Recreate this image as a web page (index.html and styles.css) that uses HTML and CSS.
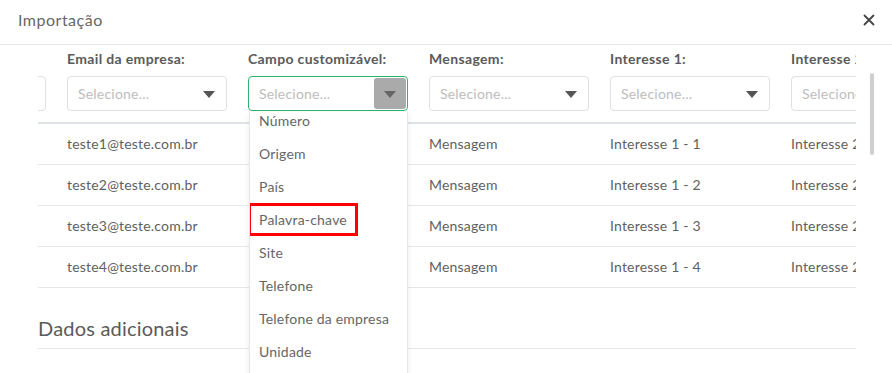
FILE: index.html
```html
<!DOCTYPE html>
<html lang="pt-BR">
<head>
  <meta charset="UTF-8" />
  <meta name="viewport" content="width=device-width, initial-scale=1.0" />
  <title>Importação</title>
  <link rel="stylesheet" href="styles.css">
</head>
<body>
  <div class="modal">
    <header class="modal-header">
      <h2>Importação</h2>
      <button class="close" aria-label="Fechar">
        <svg width="12" height="12" viewBox="0 0 12 12"><path d="M1.5 1.5L10.5 10.5M10.5 1.5L1.5 10.5" stroke="#444" stroke-width="1.8" stroke-linecap="round"/></svg>
      </button>
    </header>

    <div class="modal-body">
      <div class="table-clip">
        <table class="map-table">
          <thead>
            <tr>
              <th><label></label><div class="select"></div></th>
              <th><label>Email da empresa:</label><div class="select"><span>Selecione...</span><i class="caret"></i></div></th>
              <th><label>Campo customizável:</label><div class="select focused"><span>Selecione...</span><span class="caret-box"><i class="caret"></i></span></div></th>
              <th><label>Mensagem:</label><div class="select"><span>Selecione...</span><i class="caret"></i></div></th>
              <th><label>Interesse 1:</label><div class="select"><span>Selecione...</span><i class="caret"></i></div></th>
              <th><label>Interesse 2:</label><div class="select"><span>Selecione...</span><i class="caret"></i></div></th>
            </tr>
          </thead>
          <tbody>
            <tr><td></td><td>teste1@teste.com.br</td><td></td><td>Mensagem</td><td>Interesse 1 - 1</td><td>Interesse 2 - 1</td></tr>
            <tr><td></td><td>teste2@teste.com.br</td><td></td><td>Mensagem</td><td>Interesse 1 - 2</td><td>Interesse 2 - 2</td></tr>
            <tr><td></td><td>teste3@teste.com.br</td><td></td><td>Mensagem</td><td>Interesse 1 - 3</td><td>Interesse 2 - 3</td></tr>
            <tr><td></td><td>teste4@teste.com.br</td><td></td><td>Mensagem</td><td>Interesse 1 - 4</td><td>Interesse 2 - 4</td></tr>
          </tbody>
        </table>
      </div>

      <h3 class="section-title">Dados adicionais</h3>
    </div>

    <div class="scrollbar"></div>

    <div class="dropdown">
      <ul>
        <li>Número</li>
        <li>Origem</li>
        <li>País</li>
        <li><span class="marked"></span>Palavra-chave</li>
        <li>Site</li>
        <li>Telefone</li>
        <li>Telefone da empresa</li>
        <li>Unidade</li>
        <li>Website</li>
      </ul>
    </div>
  </div>
</body>
</html>
```

FILE: styles.css
```css
:root {
  --text-color: #5a5a5a;
  --muted-color: #bdbdbd;
  --line-color: #e4e6e8;
  --green: #2db46a;
  --font-main: 'Lato', 'Noto Sans', sans-serif;
}

* {
  margin: 0;
  padding: 0;
  box-sizing: border-box;
}

body {
  font-family: var(--font-main);
  background: #fff;
  color: var(--text-color);
  letter-spacing: 0.2px;
  overflow: hidden;
}

.modal {
  position: relative;
  width: 892px;
  height: 373px;
  overflow: hidden;
  background: #fff;
}

.modal-header {
  height: 45px;
  padding: 0 17px 0 18px;
  display: flex;
  justify-content: space-between;
  align-items: center;
  border-bottom: 1px solid var(--line-color);
}

.modal-header h2 {
  font-size: 16px;
  font-weight: 400;
  letter-spacing: 0.5px;
  color: #666;
  margin-top: -6px;
}

.close {
  background: none;
  border: none;
  width: 12px;
  height: 12px;
  display: flex;
  margin-top: -5px;
  cursor: pointer;
}

.modal-body {
  padding: 0 36px 0 38px;
}

.table-clip {
  overflow: hidden;
  width: 818px;
}

.map-table {
  table-layout: fixed;
  border-collapse: collapse;
  width: 1086px;
  margin-left: -152px;
}

.map-table th,
.map-table td {
  width: 181px;
  padding: 0 21px 0 0;
  text-align: left;
  white-space: nowrap;
}

.map-table th {
  vertical-align: top;
  padding-top: 5px;
  padding-bottom: 11px;
  border-bottom: 2px solid #dfe2e6;
}

.map-table th label {
  display: block;
  height: 18px;
  font-size: 14px;
  font-weight: 700;
  letter-spacing: 0.35px;
  line-height: 18px;
  color: #5a5a5a;
}

.map-table td {
  height: 41px;
  font-size: 14px;
  color: #5f5f5f;
  border-bottom: 1px solid var(--line-color);
}

.select {
  margin-top: 8px;
  width: 160px;
  height: 35px;
  border: 1px solid #e0e0e0;
  border-radius: 4px;
  padding: 0 11px 0 10px;
  display: flex;
  align-items: center;
  justify-content: space-between;
  font-size: 14px;
  font-weight: 400;
  color: var(--muted-color);
}

.caret {
  width: 0;
  height: 0;
  border-left: 6px solid transparent;
  border-right: 6px solid transparent;
  border-top: 7px solid #555;
  margin-top: 2px;
}

.select.focused {
  border-color: var(--green);
  padding-right: 1px;
}

.caret-box {
  width: 32px;
  height: 31px;
  border-radius: 3px;
  background: #aaa;
  display: flex;
  align-items: center;
  justify-content: center;
}

.caret-box .caret {
  border-top-color: #666;
}

.section-title {
  margin-top: 28px;
  font-size: 20px;
  font-weight: 400;
  line-height: 24px;
  color: #5a5a5a;
  padding-bottom: 8px;
  border-bottom: 1px solid var(--line-color);
}

.scrollbar {
  position: absolute;
  left: 870px;
  top: 73px;
  width: 4px;
  height: 82px;
  border-radius: 2px;
  background: #cfcfcf;
}

.dropdown {
  position: absolute;
  left: 249px;
  top: 112px;
  width: 159px;
  height: 280px;
  background: #fff;
  border: 1px solid #e6e6e6;
  border-top: none;
  box-shadow: 0 2px 6px rgba(0,0,0,0.08);
  overflow: hidden;
}

.dropdown ul {
  list-style: none;
  margin-top: -8px;
}

.dropdown li {
  position: relative;
  height: 33px;
  line-height: 33px;
  padding-left: 9px;
  font-size: 14px;
  color: #666;
  white-space: nowrap;
}

.marked {
  position: absolute;
  left: -2px;
  top: 0;
  width: 110px;
  height: 33px;
  border: 3px solid #f00;
}
```
